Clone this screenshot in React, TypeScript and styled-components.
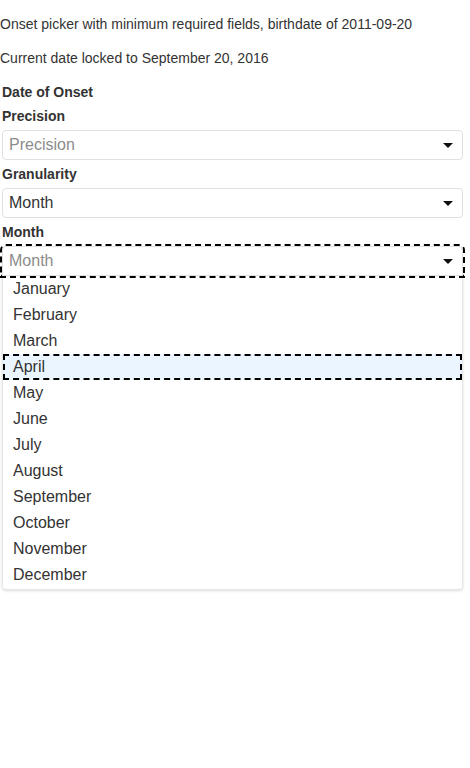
import React, { useState } from 'react';
import styled, { createGlobalStyle } from 'styled-components';

const GlobalStyle = createGlobalStyle`
  body {
    margin: 0;
    background: #fff;
    color: #333;
    font-family: 'Liberation Sans', Arial, sans-serif;
    font-size: 14px;
    line-height: 20px;
  }
`;

const Intro = styled.p`
  margin: 14px 0;
`;

const Form = styled.div`
  padding: 0 7px 0 2px;
`;

const Heading = styled.div`
  font-weight: bold;
  margin-bottom: 4px;
`;

const Label = styled.label`
  display: block;
  font-weight: bold;
  margin-bottom: 4px;
`;

const Field = styled.div`
  margin-bottom: 4px;
`;

const Control = styled.div<{ $focused?: boolean; $open?: boolean }>`
  position: relative;
  z-index: 2;
  display: flex;
  align-items: center;
  height: 30px;
  box-sizing: border-box;
  border: 1px solid #e0e0e0;
  border-radius: ${p => (p.$open ? '4px 4px 0 0' : '4px')};
  background: #fff;
  padding: 0 9px 0 6px;
  font-size: 16px;
  cursor: default;
  outline: ${p => (p.$focused ? '2px dashed #000' : 'none')};
`;

const Value = styled.span<{ $placeholder?: boolean }>`
  flex: 1;
  color: ${p => (p.$placeholder ? '#8c8c8c' : '#333')};
`;

const Arrow = styled.span`
  width: 0;
  height: 0;
  border-style: solid;
  border-width: 5px 5px 0;
  border-color: #111 transparent transparent;
`;

const Menu = styled.div`
  position: relative;
  z-index: 1;
  margin-top: -1px;
  padding-bottom: 1px;
  background: #fff;
  border: 1px solid #e6e6e6;
  border-radius: 0 0 4px 4px;
  box-shadow: 0 1px 3px rgba(0, 0, 0, 0.14);
`;

const Option = styled.div<{ $active?: boolean }>`
  padding: 4px 10px;
  font-size: 16px;
  line-height: 18px;
  color: #333;
  background: ${p => (p.$active ? '#ebf5ff' : '#fff')};
  outline: ${p => (p.$active ? '2px dashed #000' : 'none')};
  outline-offset: -2px;
`;

const months = [
  'January', 'February', 'March', 'April', 'May', 'June',
  'July', 'August', 'September', 'October', 'November', 'December',
];

const Select: React.FC<{
  value?: string;
  placeholder: string;
  focused?: boolean;
  options?: string[];
  active?: number;
}> = ({ value, placeholder, focused, options, active }) => (
  <Field>
    <Control $focused={focused} $open={!!options}>
      <Value $placeholder={!value}>{value || placeholder}</Value>
      <Arrow />
    </Control>
    {options && (
      <Menu>
        {options.map((o, i) => (
          <Option key={o} $active={i === active}>{o}</Option>
        ))}
      </Menu>
    )}
  </Field>
);

const App: React.FC = () => {
  const [active] = useState(3);

  return (
    <>
      <GlobalStyle />
      <Intro>Onset picker with minimum required fields, birthdate of 2011-09-20</Intro>
      <Intro>Current date locked to September 20, 2016</Intro>
      <Form>
        <Heading>Date of Onset</Heading>
        <Label>Precision</Label>
        <Select placeholder="Precision" />
        <Label>Granularity</Label>
        <Select value="Month" placeholder="Granularity" />
        <Label>Month</Label>
        <Select placeholder="Month" focused options={months} active={active} />
      </Form>
    </>
  );
};

export default App;
